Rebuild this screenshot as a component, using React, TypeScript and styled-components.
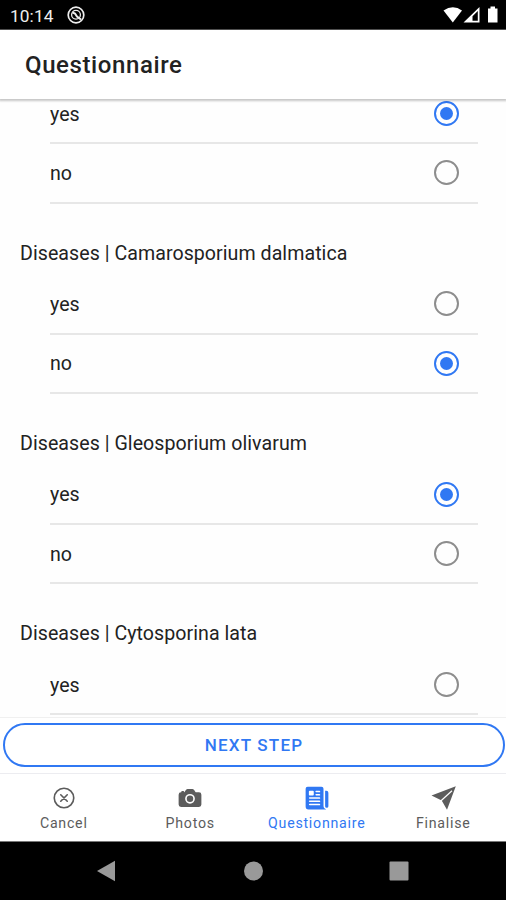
import React from 'react';
import styled, { createGlobalStyle } from 'styled-components';
import { IoCamera, IoCloseCircleOutline, IoNewspaper } from 'react-icons/io5';

const BLUE = '#3078f3';

const GlobalStyle = createGlobalStyle`
  * { box-sizing: border-box; }
  body { margin: 0; background: #fff; font-family: Roboto, sans-serif; color: #222; }
`;

const Screen = styled.div`
  display: flex;
  flex-direction: column;
  width: 506px;
  height: 900px;
  overflow: hidden;
  background: #fefefe;
`;

const StatusBar = styled.div`
  display: flex;
  align-items: center;
  justify-content: space-between;
  height: 30px;
  flex: none;
  padding: 1px 6px 0 10px;
  background: #000;
  border-bottom: 1px solid #555;
  color: #eee;
`;

const StatusIcons = styled.div`
  display: flex;
  align-items: center;
  gap: 12px;
`;

const Clock = styled.span`
  width: 45px;
  font-size: 17.3px;
  line-height: 20px;
  letter-spacing: 0.1px;
  padding-top: 2px;
`;

const Header = styled.header`
  display: flex;
  align-items: center;
  position: relative;
  height: 69px;
  flex: none;
  padding: 0 25px;
  background: #fff;
  box-shadow: 0 1px 2px 1px rgba(0, 0, 0, 0.22);
`;

const Title = styled.h1`
  margin: 0;
  font-size: 24px;
  font-weight: 500;
  line-height: 30px;
  letter-spacing: 0.6px;
`;

const Content = styled.main`
  flex: 1;
  min-height: 0;
  overflow: hidden;
`;

const ScrolledList = styled.div`
  margin-top: -14px;
`;

const Question = styled.h2`
  height: 71.7px;
  margin: 0;
  padding: 36.3px 20px 0;
  font-size: 19.6px;
  font-weight: 400;
  line-height: 28px;
  letter-spacing: 0.05px;
`;

const Option = styled.div`
  display: flex;
  align-items: center;
  justify-content: space-between;
  height: 59.3px;
  margin: 0 28px 0 50px;
  padding-right: 19px;
  border-bottom: 2px solid #e7e7e7;
  font-size: 19.6px;
  line-height: 24px;
`;

const OptionLabel = styled.span`
  padding-top: 2.4px;
`;

const Radio = styled.span<{ $checked: boolean }>`
  display: grid;
  place-items: center;
  width: 25px;
  height: 25px;
  border: 2px solid ${(p) => (p.$checked ? BLUE : '#8d8d8d')};
  border-radius: 50%;

  &::after {
    content: '';
    width: 13px;
    height: 13px;
    border-radius: 50%;
    background: ${(p) => (p.$checked ? BLUE : 'transparent')};
  }
`;

const Footer = styled.div`
  flex: none;
  height: 56px;
  padding: 5px 1px 7px 3px;
  border-top: 1px solid #f0f0f0;
  background: #fff;
`;

const NextButton = styled.button`
  display: block;
  width: 100%;
  height: 44px;
  padding: 0;
  border: 2px solid ${BLUE};
  border-radius: 22px;
  background: #fff;
  color: ${BLUE};
  font: 500 17px/20px Roboto, sans-serif;
  letter-spacing: 1.2px;
`;

const TabBar = styled.nav`
  display: flex;
  flex: none;
  height: 69px;
  border-top: 1px solid #ececf0;
  border-bottom: 1px solid #777;
  background: #fff;
`;

const Tab = styled.div<{ $active: boolean }>`
  display: flex;
  flex: 1;
  flex-direction: column;
  align-items: center;
  padding: 11px 0 0 1px;
  color: ${(p) => (p.$active ? BLUE : '#5c5c5c')};

  svg { width: 26px; height: 26px; }
`;

const TabLabel = styled.span`
  margin-top: 3px;
  font-size: 14.2px;
  line-height: 18px;
  letter-spacing: 0.75px;
`;

const SystemNav = styled.div`
  display: flex;
  align-items: center;
  justify-content: space-between;
  flex: none;
  height: 58px;
  padding: 0 97px 0 96px;
  background: #000;

  svg { display: block; }
`;

function SendIcon() {
  return (
    <svg viewBox="0 0 26 26">
      <path d="M1.5 10.5 25.8 1.2 17 24.8 11.7 15.4Z" fill="currentColor" />
      <path d="M10.5 16.3 22 5.8" stroke="#fff" strokeWidth="1.2" />
    </svg>
  );
}

const groups = [
  { title: '', options: ['yes', 'no'], answer: 'yes' },
  { title: 'Diseases | Camarosporium dalmatica', options: ['yes', 'no'], answer: 'no' },
  { title: 'Diseases | Gleosporium olivarum', options: ['yes', 'no'], answer: 'yes' },
  { title: 'Diseases | Cytosporina lata', options: ['yes'], answer: '' },
];

const tabs = [
  { label: 'Cancel', Icon: IoCloseCircleOutline },
  { label: 'Photos', Icon: IoCamera },
  { label: 'Questionnaire', Icon: IoNewspaper },
  { label: 'Finalise', Icon: SendIcon },
];

export default function App() {
  return (
    <>
      <GlobalStyle />
      <Screen>
        <StatusBar>
          <StatusIcons>
            <Clock>10:14</Clock>
            <svg width="18" height="18" viewBox="0 0 18 18" fill="none" stroke="#eee">
              <circle cx="9" cy="9" r="7.8" strokeWidth="1.7" />
              <circle cx="9" cy="8.8" r="4.4" strokeWidth="1.3" />
              <path d="M5.5 6.5 8 7.5 10 10.5 14 13.5" strokeWidth="2" />
            </svg>
          </StatusIcons>
          <svg width="57" height="20" viewBox="0 0 57 20" fill="#fff">
            <path d="M.5 5.5Q10 -1 19 5.5L9.8 17.5Z" />
            <path fillRule="evenodd" d="M20.5 17.5 36.5 2V17.5ZM29.5 15.8H34.8V6L29.5 11.3Z" />
            <path d="M45 3.5H47.5V1.5H52V3.5H54.5V17.5H45Z" />
          </svg>
        </StatusBar>
        <Header>
          <Title>Questionnaire</Title>
        </Header>
        <Content>
          <ScrolledList>
            {groups.map(({ title, options, answer }) => (
              <section key={title}>
                {title && <Question>{title}</Question>}
                {options.map((value) => (
                  <Option key={value}>
                    <OptionLabel>{value}</OptionLabel>
                    <Radio $checked={value === answer} />
                  </Option>
                ))}
              </section>
            ))}
          </ScrolledList>
        </Content>
        <Footer>
          <NextButton>NEXT STEP</NextButton>
        </Footer>
        <TabBar>
          {tabs.map(({ label, Icon }) => (
            <Tab key={label} $active={label === 'Questionnaire'}>
              <Icon />
              <TabLabel>{label}</TabLabel>
            </Tab>
          ))}
        </TabBar>
        <SystemNav>
          <svg width="19" height="22" viewBox="0 0 19 22" fill="#999"><path d="M1 11 19 .7V21.3Z" /></svg>
          <svg width="22" height="20" viewBox="0 0 22 20" fill="#999"><circle cx="12.5" cy="10" r="9.5" /></svg>
          <svg width="20" height="20" viewBox="0 0 20 20" fill="#999"><rect x=".5" y=".5" width="19" height="19" rx="1" /></svg>
        </SystemNav>
      </Screen>
    </>
  );
}
